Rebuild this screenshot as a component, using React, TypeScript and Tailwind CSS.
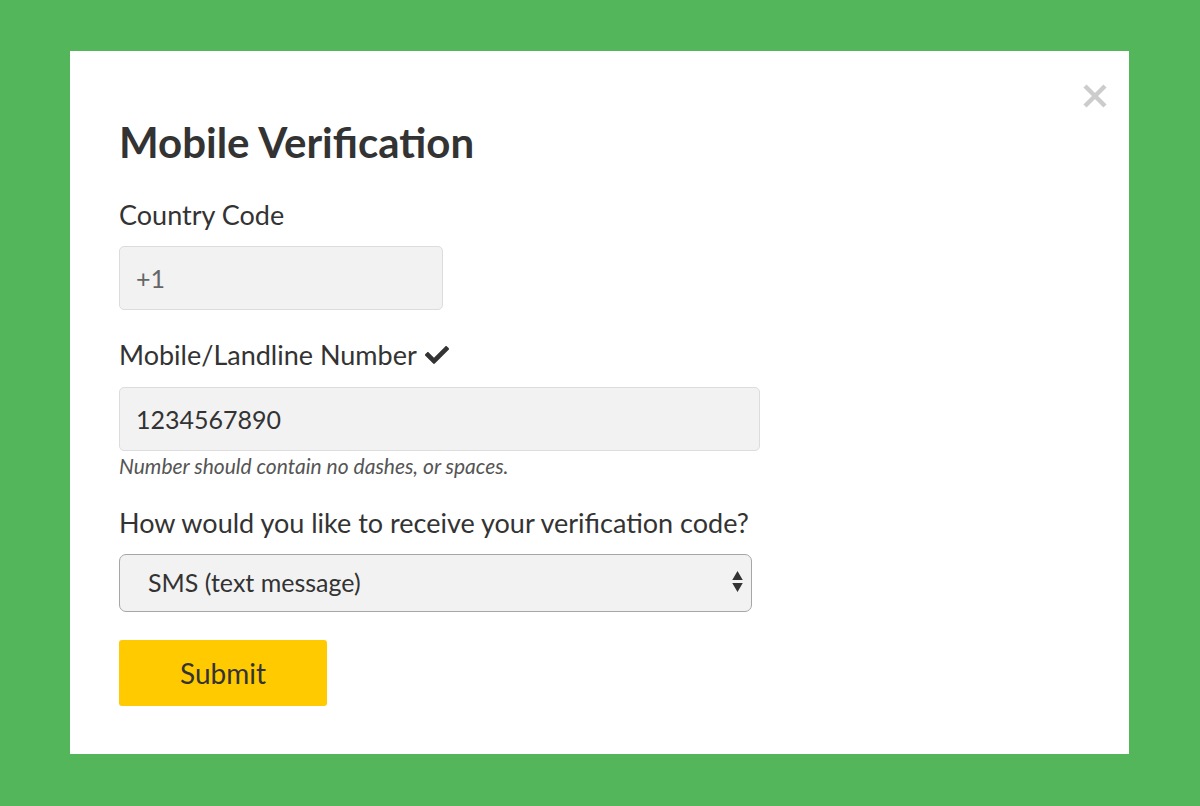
export default function App() {
  return (
    <div className="min-h-screen bg-[#53b65a] pt-[51px] pb-[52px] px-[70px]" style={{ fontFamily: 'Lato, "Noto Sans", sans-serif' }}>
      <div className="relative h-[703px] w-[1059px] bg-white pl-[49px] pt-[67px] text-[#333]">
        {/* Close */}
        <button className="absolute right-[21px] top-[32px] h-[26px] w-[26px]" aria-label="Close">
          <svg viewBox="0 0 26 26" className="h-[26px] w-[26px]">
            <path d="M3 3 L23 23 M23 3 L3 23" stroke="#cccccc" strokeWidth="4.5" />
          </svg>
        </button>

        <h1 className="text-[42px] leading-[48px] font-bold">Mobile Verification</h1>

        <label className="mt-[33px] block text-[27px] leading-[32px]">Country Code</label>
        <input
          className="mt-[15px] block h-[64px] w-[324px] rounded-[5px] border border-[#dcdcdc] bg-[#f2f2f2] px-[16px] text-[25px] text-[#666] outline-none"
          defaultValue="+1"
        />

        <label className="mt-[29px] flex items-center gap-[8px] text-[27px] leading-[32px]">
          Mobile/Landline Number
          <svg viewBox="0 0 512 512" className="h-[24px] w-[24px]">
            <path
              fill="#333"
              d="M173.898 439.404l-166.4-166.4c-9.997-9.997-9.997-26.206 0-36.204l36.203-36.204c9.997-9.998 26.207-9.998 36.204 0L192 312.69 432.095 72.596c9.997-9.997 26.207-9.997 36.204 0l36.203 36.204c9.997 9.997 9.997 26.206 0 36.204l-294.4 294.401c-9.998 9.997-26.207 9.997-36.204-.001z"
            />
          </svg>
        </label>
        <input
          className="mt-[16px] block h-[64px] w-[641px] rounded-[5px] border border-[#dcdcdc] bg-[#f2f2f2] px-[16px] text-[25px] text-[#333] outline-none"
          defaultValue="1234567890"
        />
        <p className="mt-[4px] text-[21px] leading-[22px] italic text-[#555]">
          Number should contain no dashes, or spaces.
        </p>

        <label className="mt-[30px] block text-[27px] leading-[32px]">
          How would you like to receive your verification code?
        </label>
        <div className="relative mt-[15px] h-[58px] w-[633px]">
          <select className="block h-[58px] w-full appearance-none rounded-[7px] border border-[#a6a6a6] bg-[#f2f2f2] pl-[28px] text-[25px] text-[#333] outline-none">
            <option>SMS (text message)</option>
            <option>Voice call</option>
          </select>
          <svg viewBox="0 0 10 20" className="pointer-events-none absolute right-[9px] top-[17px] h-[21px] w-[11px]">
            <path d="M5 0 L10 8.5 L0 8.5 Z M0 11.5 L10 11.5 L5 20 Z" fill="#333" />
          </svg>
        </div>

        <button className="mt-[28px] block h-[66px] w-[208px] rounded-[3px] bg-[#ffcb00] text-[28px] text-[#333]">
          Submit
        </button>
      </div>
    </div>
  )
}
